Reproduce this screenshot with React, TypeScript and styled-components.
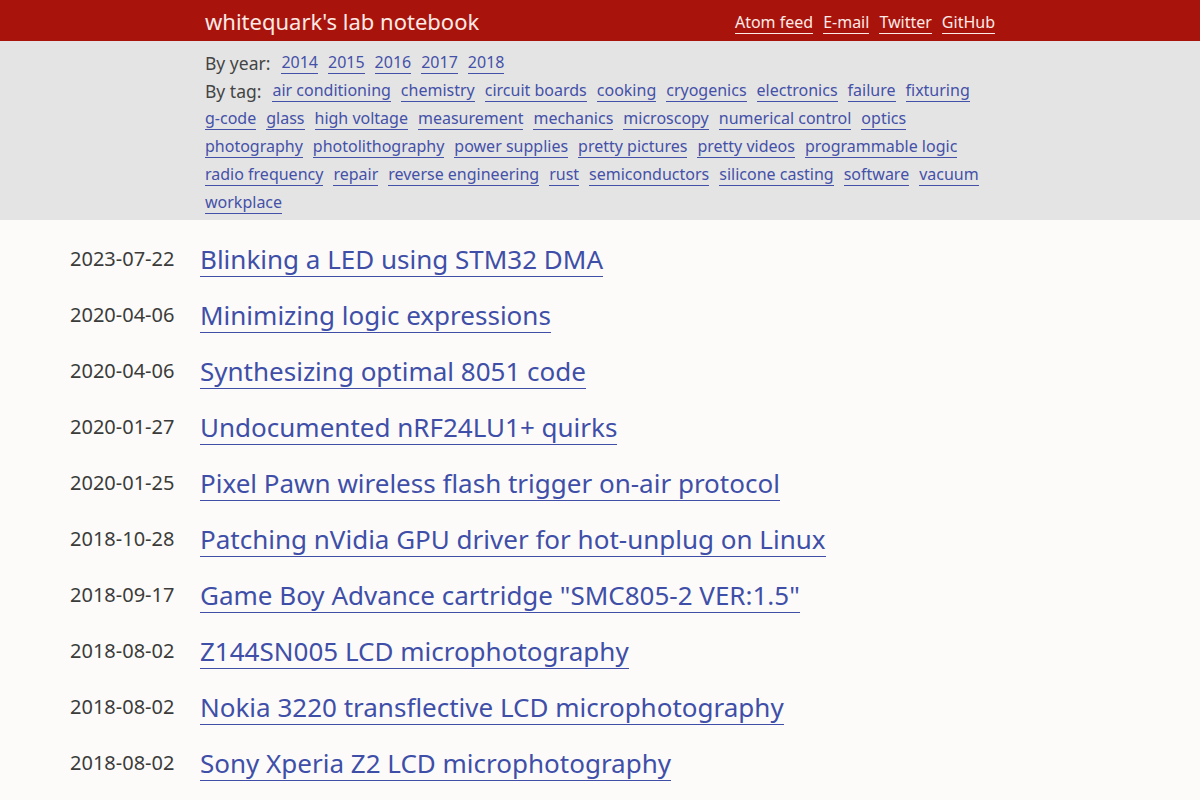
import React from "react";
import styled, { createGlobalStyle } from "styled-components";

const GlobalStyle = createGlobalStyle`
  html, body {
    margin: 0;
    padding: 0;
    background: #fcfbf9;
    font-family: "Noto Sans", "DejaVu Sans", sans-serif;
    color: #333;
  }
`;

const Header = styled.header`
  background: #a8140c;
  height: 41px;
`;

const Container = styled.div`
  width: 790px;
  margin: 0 auto;
`;

const HeaderInner = styled(Container)`
  display: flex;
  align-items: center;
  justify-content: space-between;
  height: 41px;
`;

const SiteTitle = styled.a`
  color: #fdeae6;
  font-size: 22px;
  text-decoration: none;
`;

const Nav = styled.nav`
  display: flex;
  gap: 10px;
  padding-top: 4px;
`;

const NavLink = styled.a`
  color: #fdeae6;
  font-size: 16px;
  text-decoration: none;
  border-bottom: 1px solid #fdeae6;
  line-height: 22px;
`;

const FilterBar = styled.div`
  background: #e4e4e4;
  padding: 8px 0 3px;
`;

const FilterRow = styled.ul`
  display: flex;
  flex-wrap: wrap;
  column-gap: 10px;
  margin: 0;
  padding: 0;
  list-style: none;
  font-size: 16px;
`;

const FilterItem = styled.li`
  display: flex;
  align-items: center;
  height: 28px;
`;

const Label = styled.span`
  color: #444;
  font-size: 17.5px;
  margin-right: 1px;
`;

const TagLink = styled.a`
  color: #4451a8;
  text-decoration: none;
  border-bottom: 1px solid #4451a8;
  line-height: 21px;
  white-space: nowrap;
`;

const PostList = styled.ul`
  list-style: none;
  margin: 0;
  padding: 22px 0 0 70px;
`;

const PostItem = styled.li`
  display: flex;
  align-items: baseline;
  height: 56px;
`;

const PostDate = styled.span`
  width: 130px;
  font-size: 20px;
  color: #3b3b3b;
  flex: none;
  position: relative;
  top: -3px;
`;

const PostTitle = styled.a`
  font-size: 26px;
  color: #3f4fa8;
  text-decoration: none;
  border-bottom: 1px solid #3f4fa8;
  line-height: 34px;
`;

const years = ["2014", "2015", "2016", "2017", "2018"];

const tags = [
  "air conditioning", "chemistry", "circuit boards", "cooking", "cryogenics",
  "electronics", "failure", "fixturing", "g-code", "glass", "high voltage",
  "measurement", "mechanics", "microscopy", "numerical control", "optics",
  "photography", "photolithography", "power supplies", "pretty pictures",
  "pretty videos", "programmable logic", "radio frequency", "repair",
  "reverse engineering", "rust", "semiconductors", "silicone casting",
  "software", "vacuum", "workplace",
];

const posts = [
  ["2023-07-22", "Blinking a LED using STM32 DMA"],
  ["2020-04-06", "Minimizing logic expressions"],
  ["2020-04-06", "Synthesizing optimal 8051 code"],
  ["2020-01-27", "Undocumented nRF24LU1+ quirks"],
  ["2020-01-25", "Pixel Pawn wireless flash trigger on-air protocol"],
  ["2018-10-28", "Patching nVidia GPU driver for hot-unplug on Linux"],
  ["2018-09-17", "Game Boy Advance cartridge \"SMC805-2 VER:1.5\""],
  ["2018-08-02", "Z144SN005 LCD microphotography"],
  ["2018-08-02", "Nokia 3220 transflective LCD microphotography"],
  ["2018-08-02", "Sony Xperia Z2 LCD microphotography"],
];

export default function App() {
  return (
    <>
      <GlobalStyle />
      <Header>
        <HeaderInner>
          <SiteTitle href="#">whitequark's lab notebook</SiteTitle>
          <Nav>
            <NavLink href="#">Atom feed</NavLink>
            <NavLink href="#">E-mail</NavLink>
            <NavLink href="#">Twitter</NavLink>
            <NavLink href="#">GitHub</NavLink>
          </Nav>
        </HeaderInner>
      </Header>
      <FilterBar>
        <Container>
          <FilterRow>
            <FilterItem>
              <Label>By year:</Label>
            </FilterItem>
            {years.map((y) => (
              <FilterItem key={y}>
                <TagLink href="#">{y}</TagLink>
              </FilterItem>
            ))}
          </FilterRow>
          <FilterRow>
            <FilterItem>
              <Label>By tag:</Label>
            </FilterItem>
            {tags.map((t) => (
              <FilterItem key={t}>
                <TagLink href="#">{t}</TagLink>
              </FilterItem>
            ))}
          </FilterRow>
        </Container>
      </FilterBar>
      <PostList>
        {posts.map(([d, t], i) => (
          <PostItem key={i}>
            <PostDate>{d}</PostDate>
            <PostTitle href="#">{t}</PostTitle>
          </PostItem>
        ))}
      </PostList>
    </>
  );
}
